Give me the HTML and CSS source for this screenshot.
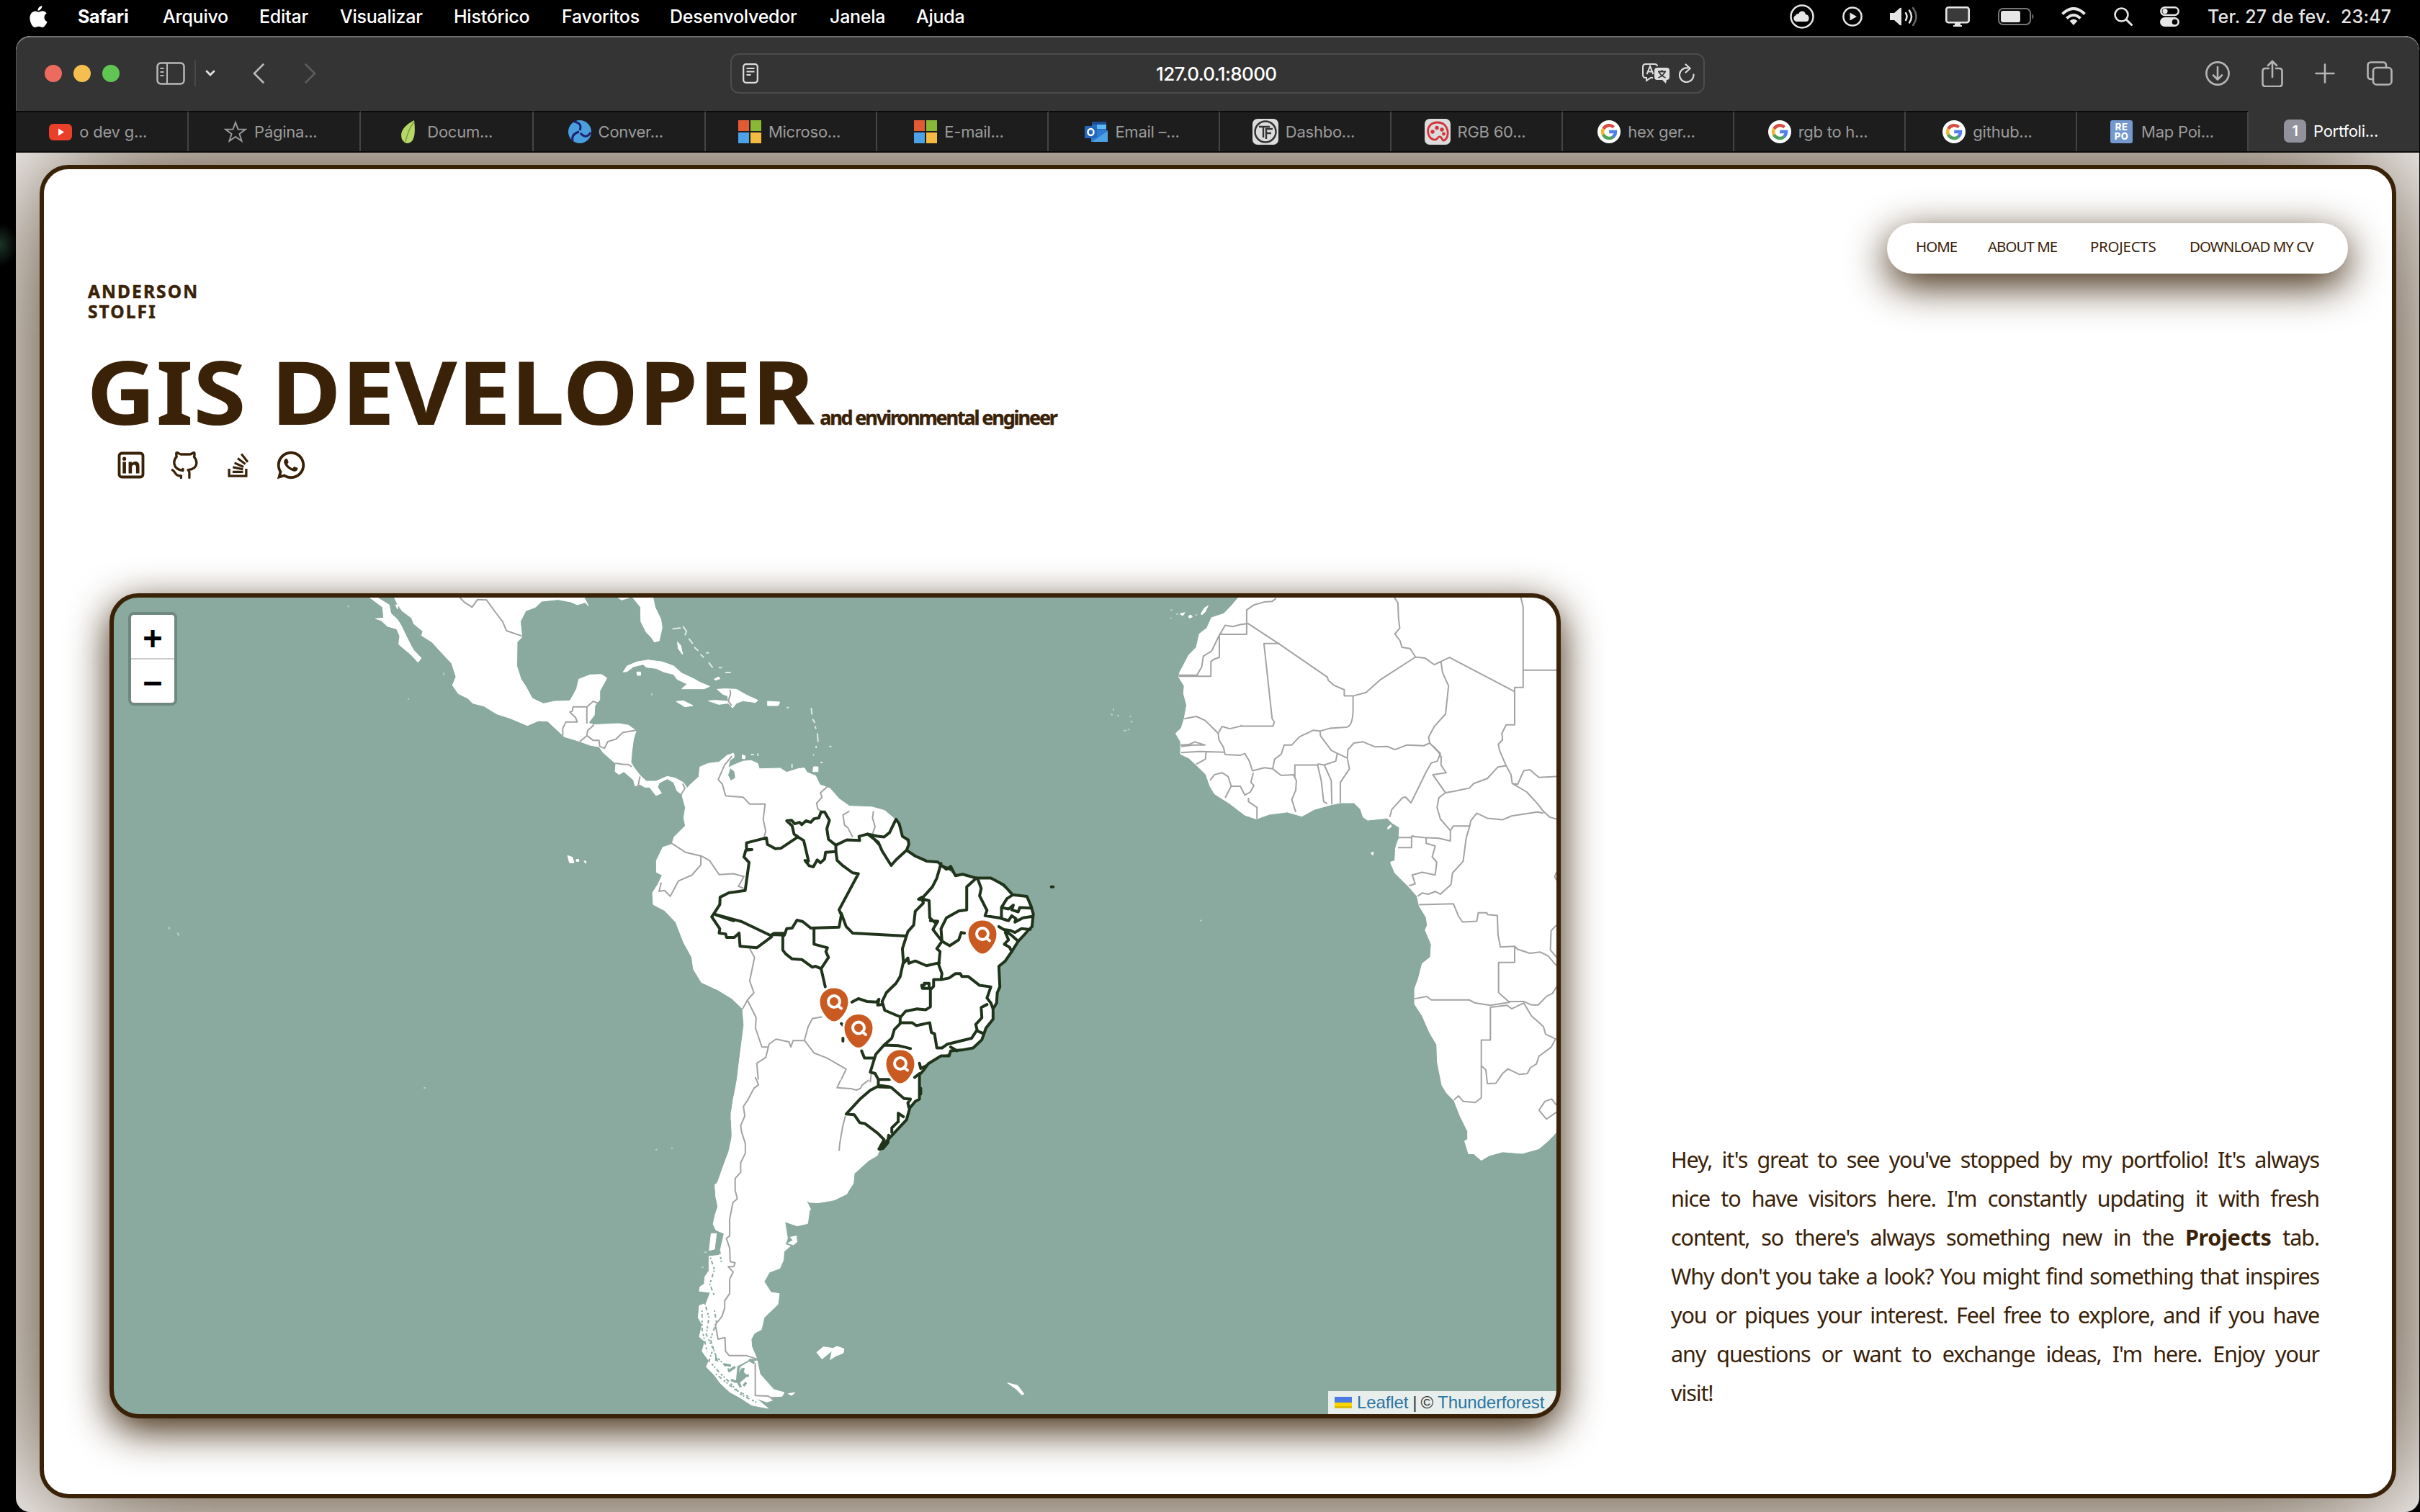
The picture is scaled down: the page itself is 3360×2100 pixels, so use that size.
FILE: index.html
```html
<!DOCTYPE html>
<html lang="pt-BR">
<head>
<meta charset="utf-8">
<title>Portfolio</title>
<link rel="stylesheet" href="styles.css">
</head>
<body>
<svg class="defs" width="0" height="0">
  <symbol id="ms" viewBox="0 0 32 32"><path fill="#e25a33" d="M0 0h15v15H0z"/><path fill="#8ab735" d="M17 0h15v15H17z"/><path fill="#4ca1e8" d="M0 17h15v15H0z"/><path fill="#f5ba41" d="M17 17h15v15H17z"/></symbol>
  <symbol id="google" viewBox="0 0 32 32"><circle cx="16" cy="16" r="16" fill="#fff"/><g fill="none" stroke-width="4.4"><path stroke="#d94b3f" d="M8.2 12A9.2 9.2 0 0 1 22.6 9.6"/><path stroke="#efb734" d="M8.2 20.4A9.2 9.2 0 0 1 8.2 11.6"/><path stroke="#4fa259" d="M22.2 22.8A9.2 9.2 0 0 1 8 20"/><path stroke="#4e80ee" d="M16.2 16H25A9.2 9.2 0 0 1 21.8 23"/></g></symbol>
  <symbol id="pin" viewBox="-3 -3 48 54"><path fill="#c85a22" stroke="#fff" stroke-width="3" d="M0 20C0 8 9-.5 21-.5S42 8 42 20C42 33 30 48.500 21 48.500S0 33 0 20z"/><circle cx="21" cy="19.500" r="8" fill="none" stroke="#fff" stroke-width="4"/><path d="m26 25 5 4" stroke="#fff" stroke-width="4" stroke-linecap="round"/></symbol>
</svg>

<header class="menubar">
  <svg class="apple" viewBox="0 0 26 32"><path fill="#fff" d="M18 0c.3 3.500-2.800 7-6 7C11.600 3.800 14.800.4 18 0zM13 9c1.300 0 3-1.400 5.600-1.400 2.200 0 4.600 1.100 6 3.200-5 3-4.200 10 .9 12-1.200 3.400-4 8.200-7.200 8.200-2 0-2.700-1.200-5-1.200S10 31 8.200 31C4.500 31 .5 24.200.5 17.800.5 11.500 4.500 7.700 8.400 7.700 10.600 7.700 12.200 9 13 9z"/></svg>
  <nav class="menus"><b>Safari</b><span>Arquivo</span><span>Editar</span><span>Visualizar</span><span>Histórico</span><span>Favoritos</span><span>Desenvolvedor</span><span>Janela</span><span>Ajuda</span></nav>
  <div class="status">
    <svg width="34" height="34" viewBox="0 0 34 34"><circle cx="17" cy="17" r="15.500" fill="none" stroke="#e6e6e6" stroke-width="2.500"/><path fill="#e6e6e6" d="M9 24a4.500 4.500 0 0 1-1-8.500c1-2.500 3-2.500 4-2 2-5.500 9-5 10 .5 6 0 6 10 1 10z"/></svg>
    <svg width="28" height="28" viewBox="0 0 28 28"><circle cx="14" cy="14" r="12.600" fill="none" stroke="#e6e6e6" stroke-width="2.500"/><path fill="#e6e6e6" d="M10.500 8.500 20 14l-9.500 5.500z"/></svg>
    <svg width="38" height="28" viewBox="0 0 38 28"><path fill="#e6e6e6" d="M0 9h6l8-7q2-1 2 1v22q0 2-2 1l-8-7H0z"/><g fill="none" stroke="#e6e6e6" stroke-width="2.500" stroke-linecap="round"><path d="M22 9q3 5 0 10"/><path d="M27 5.500q6 8.500 0 17"/><path stroke="#666" d="M32 2q9 12 0 24"/></g></svg>
    <svg width="34" height="28" viewBox="0 0 34 28"><rect x="1.300" y="1.300" width="31.400" height="21" rx="3" fill="#3a3a3a" stroke="#e6e6e6" stroke-width="2.600"/><path fill="#e6e6e6" d="M13 22h8v4h2v2H11v-2h2z"/></svg>
    <svg width="50" height="24" viewBox="0 0 50 24"><rect x="1" y="1" width="44" height="22" rx="6" fill="none" stroke="#777" stroke-width="2"/><rect x="4" y="4" width="27" height="16" rx="3" fill="#e6e6e6"/><path fill="#777" d="M47.500 8q4 4 0 8z"/></svg>
    <svg width="34" height="26" viewBox="0 0 34 26"><g fill="none" stroke="#e6e6e6" stroke-width="4"><path d="M1.500 9.500q15.500-15 31 0"/><path d="M7.500 15.500q9.500-9 19 0"/></g><path fill="#e6e6e6" d="m17 25-5.500-6q5.500-5 11 0z"/></svg>
    <svg width="26" height="26" viewBox="0 0 26 26"><circle cx="10.500" cy="10.500" r="9" fill="none" stroke="#e6e6e6" stroke-width="2.600"/><path d="m17 17 7.500 7.500" stroke="#e6e6e6" stroke-width="3" stroke-linecap="round"/></svg>
    <svg width="27" height="28" viewBox="0 0 27 28"><rect x="1.300" y="1.300" width="24.400" height="10.600" rx="5.300" fill="none" stroke="#e6e6e6" stroke-width="2.500"/><circle cx="7" cy="6.600" r="3.600" fill="#e6e6e6"/><rect y="15" width="27" height="13" rx="6.500" fill="#e6e6e6"/><circle cx="20.500" cy="21.500" r="3.800" fill="#000"/></svg>
    <span class="clock">Ter. 27 de fev.&nbsp; 23:47</span>
  </div>
</header>

<main class="window">
  <div class="toolbar">
    <div class="lights"><i></i><i></i><i></i></div>
    <svg class="side" viewBox="0 0 40 32"><rect x="1.500" y="1.500" width="37" height="29" rx="5" fill="none" stroke="#b8b8b8" stroke-width="2.500"/><path d="M15 2v28M5.500 9h5M5.500 14h5M5.500 19h5" stroke="#b8b8b8" stroke-width="2"/></svg>
    <span class="sep"></span>
    <svg class="chev" viewBox="0 0 14 10"><path d="m2 2 5 5 5-5" fill="none" stroke="#e0e0e0" stroke-width="2.800" stroke-linecap="round"/></svg>
    <svg class="back" viewBox="0 0 16 28"><path d="M14.500 1.500 2 14l12.500 12.500" fill="none" stroke="#b8b8b8" stroke-width="2.600" stroke-linecap="round"/></svg>
    <svg class="fwd" viewBox="0 0 16 28"><path d="M1.500 1.500 14 14 1.500 26.500" fill="none" stroke="#5c5c5c" stroke-width="2.600" stroke-linecap="round"/></svg>
    <div class="url">
      <svg width="22" height="28" viewBox="0 0 22 28"><rect x="1.200" y="1.200" width="19.600" height="25.600" rx="3.500" fill="none" stroke="#ddd" stroke-width="2.200"/><path d="M5.500 7h11M5.500 11.500h11M5.500 16h6" stroke="#ddd" stroke-width="2"/></svg>
      <span class="address">127.0.0.1:8000</span>
      <svg class="translate" width="38" height="28" viewBox="0 0 38 28"><path d="M15 20h-3l-6 4v-4H5q-4 0-4-4V5q0-4 4-4h12q4 0 4 3" fill="none" stroke="#ddd" stroke-width="2"/><path d="m6.500 15 4.500-11 4.500 11M8 11.500h6" fill="none" stroke="#ddd" stroke-width="2"/><path fill="#ddd" d="M21 6h13q4 0 4 4v9q0 4-4 4l-1 5-5-5h-7q-4 0-4-4v-9q0-4 4-4z"/><path d="M22 11.500h11M27.500 9v3M31.500 12q-2 5-9 8M23.500 12q2 5 9 8" fill="none" stroke="#343434" stroke-width="1.800"/></svg>
      <svg width="22" height="28" viewBox="0 0 22 28"><path d="M12 6.500a9.800 9.800 0 1 0 8.500 9M9.500 1.500l6 5.500-6 5.500" fill="none" stroke="#ddd" stroke-width="2.200" stroke-linecap="round"/></svg>
    </div>
    <div class="tools">
      <svg width="34" height="34" viewBox="0 0 34 34"><circle cx="17" cy="17" r="15.600" class="ln"/><path class="ln" d="M17 8v17M11 19.500l6 6 6-6"/></svg>
      <svg width="30" height="38" viewBox="0 0 30 38"><path class="ln" d="M10 12H5.500q-4 0-4 4v17q0 4 4 4h19q4 0 4-4V16q0-4-4-4H20M15 24V2M9 8l6-6 6 6"/></svg>
      <svg width="28" height="28" viewBox="0 0 28 28"><path class="ln" d="M14 1.500v25M1.500 14h25"/></svg>
      <svg width="36" height="34" viewBox="0 0 36 34"><rect class="ln" x="9" y="9" width="25.500" height="23.500" rx="4.500"/><path class="ln" d="M9 25H6q-4.500 0-4.500-4.500V6Q1.500 1.500 6 1.500h16.500Q27 1.500 27 6v3"/></svg>
    </div>
  </div>

  <div class="tabs">
    <div class="tab"><svg viewBox="0 0 32 32"><rect y="5" width="32" height="23" rx="6" fill="#ea3f28"/><path fill="#fff" d="m13 11.500 8 5-8 5z"/></svg>o dev g...</div>
    <div class="tab"><svg viewBox="0 0 32 32"><path d="m16 3 3.500 9.500 10 .3-8 6.200 3 9.800-8.500-5.800-8.500 5.800 3-9.800-8-6.200 10-.3z" fill="none" stroke="#999" stroke-width="2"/></svg>Página...</div>
    <div class="tab"><svg viewBox="0 0 32 32"><path fill="#b7d869" d="M24 0q4 32-10 32-8-2-8-12Q7 9 24 0z"/><path d="M24 2Q16 12 12 30" fill="none" stroke="#7d9d3c" stroke-width="1.500"/></svg>Docum...</div>
    <div class="tab"><svg viewBox="0 0 32 32"><circle cx="16" cy="16" r="16" fill="#4a9fdf"/><g fill="none" stroke="#20206e" stroke-width="3"><path d="M8 2q12 2 8 12"/><path d="M31 17q-6 10-14 1"/><path d="M6 29q-2-10 9-13"/></g></svg>Conver...</div>
    <div class="tab"><svg><use href="#ms"/></svg>Microso...</div>
    <div class="tab"><svg><use href="#ms"/></svg>E-mail...</div>
    <div class="tab"><svg viewBox="0 0 32 32"><path fill="#2b6fc9" d="M10 2h20v20H10z"/><path fill="#1d4d97" d="M10 2h20v4H10z"/><path fill="#5db9f0" d="M17 6h13v6H17z"/><path fill="#2f7bd2" d="M9 14h23v16H9z"/><path fill="#4ea2e4" d="m32 15-22 15h22z"/><rect y="8" width="17" height="17" rx="1.500" fill="#2567bd"/><ellipse cx="8.500" cy="16.500" rx="4" ry="4.500" fill="none" stroke="#fff" stroke-width="2.500"/></svg>Email –...</div>
    <div class="tab"><svg class="big" viewBox="0 0 36 36"><rect width="36" height="36" rx="7" fill="#dcdcdc"/><circle cx="18" cy="18" r="14.500" fill="none" stroke="#333" stroke-width="2.500"/><path d="M9 11h15M15 11v15M28 14h-9v14M19 20h7" fill="none" stroke="#333" stroke-width="2.400"/></svg>Dashbo...</div>
    <div class="tab"><svg class="big" viewBox="0 0 36 36"><rect width="36" height="36" rx="7" fill="#dcdcdc"/><path d="M18 5c17 0 17 22 9 25-4 1-2-6-7-5-3 1-2 5-7 4C2 27 0 5 18 5z" fill="none" stroke="#d2343a" stroke-width="2.800"/><g fill="#d2343a"><circle cx="11" cy="18" r="2.700"/><circle cx="17" cy="12.500" r="2.700"/><circle cx="24" cy="15" r="2.700"/><circle cx="26.500" cy="21" r="2.400"/></g></svg>RGB 60...</div>
    <div class="tab"><svg><use href="#google"/></svg>hex ger...</div>
    <div class="tab"><svg><use href="#google"/></svg>rgb to h...</div>
    <div class="tab"><svg><use href="#google"/></svg>github...</div>
    <div class="tab"><span class="fav repo">RE<br>PO</span>Map Poi...</div>
    <div class="tab on"><span class="fav one">1</span>Portfoli...</div>
  </div>

  <section class="page">
    <article class="card">
      <nav class="pill"><a>HOME</a><a>ABOUT ME</a><a class="wide">PROJECTS</a><a>DOWNLOAD MY CV</a></nav>
      <p class="name"><span>ANDERSON</span><span>STOLFI</span></p>
      <h1><span class="gis">GIS DEVELOPER</span><small>and environmental engineer</small></h1>
      <div class="social">
        <svg viewBox="0 0 24 24"><rect x="3.400" y="3.400" width="17.200" height="17.200" rx="1.800" fill="none" stroke="#3a2208" stroke-width="2"/><path d="M5.900 9.600h2.400V18H5.900zM10.200 9.600h2.300v1c1.700-1.900 5.500-1.600 5.500 2V18h-2.400v-4.500c0-2.500-3-2.300-3 0V18h-2.400z"/><circle cx="7.100" cy="7.400" r="1.350"/></svg>
        <svg viewBox="0 0 24 24"><path class="cat" d="M10.900 14.800V16C2.500 14.500 4.300 8 6.400 5.900 6 4.500 6 3 6.500 3c1.200 0 2 1.300 3.200 1.200h5.900C17 4.300 18 3 19 3c.4 0 .5 1.500 0 2.900 2 2.300 4 8.600-4.300 9.600q.9.8.9 2v3.600M3.300 15.600c2.300.7 1.700 4.600 6.300 4.100v1.500"/></svg>
        <svg viewBox="0 0 24 24"><path d="M5.800 14.600v5.300h12.400v-5.300" fill="none" stroke="#3a2208" stroke-width="1.700"/><path d="M8.300 16.900h7.600M8.500 13.500l7.400 1.500M9.700 10.400l6.500 2.900M12 7l5.500 4.200M14.700 3.900l4.600 5.900" stroke="#3a2208" stroke-width="1.600"/></svg>
        <svg viewBox="0 0 24 24"><path d="m7.254 18.494.724.423A7.953 7.953 0 0 0 12.001 20a8 8 0 1 0-8-8c0 1.436.377 2.813 1.084 4.024l.422.724-.653 2.401 2.400-.655zM2.005 22l1.352-4.968A9.954 9.954 0 0 1 2.001 12c0-5.523 4.477-10 10-10s10 4.477 10 10-4.477 10-10 10a9.954 9.954 0 0 1-5.030-1.355L2.004 22zM8.392 7.308c.134-.01.269-.01.403-.004.054.004.108.01.162.016.159.018.334.115.393.249.298.676.588 1.357.868 2.040.062.152.025.347-.093.537a4.380 4.380 0 0 1-.263.372c-.113.145-.356.411-.356.411s-.099.118-.061.265c.256.500.700 1.160 1.181 1.568.12.116.237.235.363.346.468.413.998.75 1.570 1 .085.037.133.059.257.112.062.026.126.049.191.066a.35.35 0 0 0 .367-.13c.724-.877.79-.934.796-.934a.482.482 0 0 1 .378-.127c.06.004.121.015.177.04.531.243 1.400.622 1.400.622l.582.261c.098.047.187.158.19.265.004.067.01.175-.013.373-.032.259-.11.57-.188.733a2.378 2.378 0 0 1-.54.590 5.024 5.024 0 0 1-.508.310 1.990 1.990 0 0 1-.833.23c-.185.01-.37.024-.556.014-.008 0-.568-.087-.568-.087a9.448 9.448 0 0 1-3.840-2.046c-.226-.199-.435-.413-.649-.626-.89-.885-1.562-1.840-1.970-2.742A3.470 3.470 0 0 1 6.900 9.620a2.729 2.729 0 0 1 .564-1.680c.073-.094.142-.192.261-.305.127-.12.207-.184.294-.228a.961.961 0 0 1 .371-.1z"/></svg>
      </div>

      <div class="row">
        <div class="map">
          <svg class="world" viewBox="158 830 2003 1134">
            <path class="isles faint" d="M235 1288v2M247 1296l1 3M589 1511h1M1543 992l1 1M1552 994h1M1546 985v1"/>
            <!-- North and Central America, Caribbean -->
            <g transform="translate(480 810) scale(.44643 .33333)">
              <g class="land">
                <path d="M150 55 160 85 175 115 205 145 212 170 240 200 236 218 268 245 300 292 330 335 343 390 332 425 350 460 380 480 395 500 430 512 470 545 510 562 565 593 600 573 628 575 660 615 680 640 725 658 760 675 788 682 800 705 840 752 838 785 850 797 865 785 895 820 900 845 915 838 930 850 945 850 965 885 982 875 970 850 975 832 1000 815 1020 830 1030 865 1045 880 1075 880 1060 850 1050 830 1025 812 1000 805 965 825 935 825 915 800 895 765 887 745 890 700 895 650 903 615 880 592 850 585 800 588 772 590 755 582 773 550 775 510 790 485 790 450 800 425 812 395 795 380 760 382 725 400 718 440 708 465 697 490 650 492 615 502 580 480 560 430 545 400 532 345 533 245 548 225 543 160 560 115 590 100 610 75 660 68 700 78 720 90 745 80 755 95 740 55z"/>
                <path d="M70 55 98 60 135 90 140 125 160 150 172 175 188 220 205 265 212 280 235 312 225 330 205 300 165 255 168 220 158 190 130 180 110 155 93 148 118 145 115 100 90 75z"/>
                <path d="M155 90h8l-2 18zM890 55 955 55 962 100 980 150 984 185 975 240 960 245 950 225 935 205 918 160 917 100zM845 58 858 70 882 60z"/>
                <path d="M863 370 875 345 905 328 940 320 985 328 1020 345 1045 375 1085 400 1100 412 1132 430 1115 440 1045 440 1062 420 1030 400 1020 380 990 370 965 355 935 350 925 338 895 348 875 368z"/>
                <path d="M905 370h12v14h-10zM1028 493 1050 490 1080 510 1055 515zM1155 442 1180 440 1215 442 1245 465 1282 488 1275 497 1235 490 1215 500 1203 520 1190 500 1160 505 1128 490 1150 488 1190 492 1188 470 1172 462zM1312 492 1350 495 1345 510 1312 510zM1032 245 1042 260 1048 297 1034 272z"/>
                <path d="M1455 765h14v20h-16zM1233 715l10 5-2 12-8-2zM1146 400l14-10 4 8-14 6zM690 1135 705 1142 710 1165 696 1165zM717 1151h8v8h-8zM741 1158h6v10z"/>
              </g>
              <path class="isles" d="M1018 190 1040 187M1050 182 1060 200 1056 215M1068 232 1078 250M1085 268 1095 280M1105 298 1112 308M1122 290h6M1130 332 1140 350M1162 352h6M1182 372h14M1373 518h3M1448 522 1450 545M1453 568 1458 580M1460 598 1462 605M1467 628 1469 658M1463 680v5M1506 680h3M1478 747h4M1262 714h6M1282 712v6M1388 755v12"/>
              <path class="isles faint" d="M305 375v5M195 482v2M8 95v3M952 460v5M1455 713v5"/>
              <path class="border" d="M355 60 370 80 393 100 410 68 438 70 465 120 488 160 500 198 548 220M675 635V605L685 578H720L715 560 697 537 705 533 707 515H750V585M750 515 770 492 785 500M772 590 752 615 750 635 728 660M750 635 770 655 788 655 790 680 805 688 815 660 840 650 862 622 903 613M838 750 865 755 878 755 890 765M915 805 908 855M1048 835 1055 855 1042 882M1195 445 1197 460 1190 490 1200 510"/>
            </g>
            <!-- South America, northern part -->
            <g transform="translate(840 1040) scale(.44643 .40816)">
              <path class="land" d="M240 160 262 125 292 95 295 62 320 50 355 45 380 22 400 15 402 28 388 40 383 65 400 55 430 42 455 40 475 50 480 68 545 66 565 80 600 68 620 65 628 80 655 92 668 122 700 135 728 170 760 195 830 198 870 210 902 240 915 255 925 300 945 325 938 345 980 375 1040 385 1085 430 1115 428 1155 442 1200 440 1265 495 1312 502 1332 560 1322 620 1285 655 1262 690 1225 740 1228 810 1215 860 1207 920 1180 955 1172 990 1145 1018 1085 1025 1050 1045 1005 1075 990 1095 978 1120 980 1190 950 1215 935 1265 885 1318 855 1365 835 1390 815 1400 775 1445 772 1480 750 1515 700 1538 660 1545 625 1535 640 1568 352 1568 342 1490 352 1470 368 1420 385 1370 395 1320 392 1240 400 1190 410 1130 418 1060 425 1000 432 940 428 885 395 850 350 820 300 795 275 750 270 710 245 660 220 590 185 550 150 530 148 490 165 460 178 430 160 420 160 380 180 335 208 325 215 300 250 262 245 235 250 200z"/>
              <path class="sea" d="M390 66 402 78 405 98 392 108 383 90z"/>
              <path class="border" d="M395 25 372 55 352 105 365 120 375 160 430 165 450 188 498 188 492 240 500 280 495 300M692 128 670 150 675 165 658 185 662 205 675 215M760 212 740 225 745 260 755 268 770 300M835 212 832 235 840 265 832 290M205 320 250 352 300 365 325 380 355 428 400 425 432 435 415 468 432 475M298 365V395L270 430 228 450 203 502 185 482 168 485 175 455M450 680 465 710 450 790 463 830 443 855 428 885M443 855 470 915 468 950 488 1015 508 1015 500 1050 472 1070 478 1140M508 1015 510 1005 532 988 572 997 578 1015 585 993 620 992 650 1035 690 1052 750 1090 732 1132M825 1135 828 1105M620 992 632 945 645 918 675 912"/>
            </g>
            <!-- Southern cone -->
            <g transform="translate(860 1500) scale(.38265 .33333)">
              <g class="land">
                <path d="M430 0 413 80 405 160 410 210 405 280 390 340 370 390 358 430 347 435 350 490 358 525 348 560 340 600 350 625 380 640 370 690 360 740 365 790 350 840 335 880 330 920 345 960 330 1020 335 1100 360 1170 385 1210 430 1190 480 1160 498 1160 480 1110 478 1080 490 1055 515 1040 525 990 575 935 580 890 550 885 525 840 545 800 582 785 595 750 597 715 620 692 602 685 610 660 600 590 645 608 683 598 690 540 675 500 690 510 720 511 780 500 825 475 850 420 850 392 905 335 935 315 945 290 900 0z"/>
                <path d="M333 640 352 640 345 705 326 710zM620 655 642 650 644 675 632 687 612 680 630 668zM440 1195 470 1175 500 1170 510 1225 560 1290 598 1302 590 1318 540 1320 555 1335 535 1342 455 1310 430 1270 465 1235zM612 1307 637 1303 625 1314z"/>
                <path d="M325 735 365 730 365 900 345 1170 440 1200 420 1260 480 1300 500 1330 540 1368 480 1355 440 1325 400 1300 365 1262 345 1230 315 1195 325 1170 300 1130 310 1090 290 1070 300 1020 286 990 290 940 315 930 330 885 290 880 292 862 308 850 310 820 325 795z"/>
                <path d="M716 1135 740 1112 775 1118 790 1110 815 1120 812 1138 785 1150 765 1165 772 1128 735 1162zM1408 1262 1445 1273 1468 1308 1460 1312 1440 1288z"/>
              </g>
              <path class="fjord" d="M330 740 345 790 328 850 345 900M310 930 325 990 315 1060 340 1120 325 1170 360 1215 400 1260 440 1310 500 1345M345 960 352 1010 330 1080 350 1150 400 1210M300 960 300 1040 318 1130M370 640 362 700 370 760M350 1225 420 1290 470 1320"/>
              <path class="strait" d="M380 1185 405 1190M395 1215 420 1195M432 1195 428 1250 440 1280M450 1200 445 1230 470 1232M470 1165 490 1180M405 1250 425 1258M460 1260 450 1275"/>
              <path class="border" d="M493 -12 505 20 488 35 465 85 450 110 455 150 440 190 443 215 457 265V305L440 345V385L420 410V460L428 495 412 510 400 580V650L388 660 400 700 402 757 420 762 415 778 395 778 413 800 400 830V890L382 920V950L372 985 348 1020 358 1080 383 1073 385 1130 398 1148 460 1148 498 1162M493 1180V1315L540 1317 560 1332M820 150 810 195 800 262 797 295M905 0 880 22 875 35 860 42 840 36 790 32 803 0"/>
              <path class="isles faint" d="M190 285h2M133 290h2M310 718h5M300 780h3"/>
            </g>
            <!-- Africa -->
            <g transform="translate(1560 800) scale(.42092 .53571)">
              <path class="land" d="M385 50 355 78 330 98 290 108 275 135 250 150 240 185 215 205 185 250 182 262 200 285 198 305 208 335 200 370 190 395 172 408 188 430 188 462 215 472 240 490 272 515 285 545 300 565 350 590 400 620 438 630 480 618 540 612 588 623 630 605 685 593 715 588 760 588 782 605 790 625 805 633 870 628 885 640 910 652 908 680 897 705 895 738 880 742 895 770 940 805 968 830 975 855 998 885 1002 905 995 918 1015 955 1012 988 985 1005 972 1045 960 1070 960 1110 985 1140 1010 1185 1033 1215 1035 1260 1050 1320 1065 1340 1090 1360 1110 1400 1135 1440 1135 1460 1125 1465 1138 1498 1155 1498 1180 1515 1205 1503 1250 1493 1315 1497 1370 1485 1400 1465 1428 1442 1440 1430 1440 50z"/>
              <path class="land" d="M186 98 202 95 195 103zM214 104l8-3 5 5-10 3zM255 98l12-15 12-6-10 16-10 8zM871 652l10-7 3 4-12 8zM816 718l8-2-2 8z"/>
              <path class="isles faint" d="M156 88h3M155 109h2M175 99h3M238 101h3M22 364h2M25 378h3M2 401h6M16 398h2M254 893h2"/>
              <path class="border" d="M503 58 490 66 465 67 430 75 406 88V151H316V211L300 215 288 222V260H182M182 257 242 257 258 235 263 208 290 195 315 155 335 128 360 131 385 126 410 123 515 177 672 262 675 270 693 283 728 295V311H757L800 302 845 270 963 210M515 175H463L490 370 497 378 493 389H388L350 396 325 390 312 408M388 386v4M893 55 905 70 907 110 911 135 895 150 912 168 918 185 945 188 963 210 995 213 1025 230 1075 211 1288 299M1310 55 1318 80V289H1290V386H1262L1248 408 1250 425 1236 436 1240 452 1262 492 1278 515 1282 538 1330 560 1365 590 1385 610 1405 625 1428 630M1318 244H1430M1047 222 1052 250 1072 285 1062 358 1025 390 1006 418 1010 433 1040 458 1048 470 1047 490 1064 510 1020 515 1062 562 1040 575 1034 600 1045 630 1078 660V687L1040 680 990 678 950 675V704H905M905 678H950M757 311V350Q755 390 735 392L680 395 648 402 625 400 580 417 555 438 530 438 520 462 498 475 492 500 465 497 425 505 415 480 400 460 385 465 335 463 330 445 315 425 312 408 270 375 240 364 200 370M648 402 650 415 672 438 685 452 705 460 738 472 740 450 760 433 790 430 830 443 870 442 895 450 935 438 990 440 1010 433M188 438 215 437 235 430 268 438 230 438 190 442M190 458 250 455 335 457M240 488 270 475 272 457M285 530 300 515 325 510 345 520 355 545 335 575M355 545 385 545 400 568 418 560 430 543 420 535 428 510M412 575 412 585 440 600V630M492 500 520 517 560 515 570 530 568 555 555 580 568 612M565 525V490H640L652 530 660 585 672 590M640 487 662 490 685 530 687 592M662 490 700 480 705 460M738 472 745 500 715 535V588M878 625 885 605 920 575 930 573 948 588 975 545 1000 505 1015 485 1035 480 1045 460 1020 440M1062 562 1090 558 1140 550 1155 538 1200 525 1235 495 1262 492M1282 538 1300 540 1320 505 1340 502 1370 522 1428 520M1078 660 1088 648H1142L1145 635 1165 615 1200 628 1250 632 1280 622 1365 612 1385 615M1142 648 1130 680 1120 740 1085 770 1080 800 1045 825 1028 818 1005 825 985 822 970 830M998 678V693L1028 700 1018 728 1033 742 1028 775 985 768 952 775 962 798 942 803M975 852 1088 850 1105 882 1118 897 1165 895 1170 873 1198 873 1200 878 1233 880 1235 930 1243 962 1290 960 1300 968 1340 978 1375 975 1400 985 1428 1010M1290 960V1002H1237V1080L1270 1103 1320 1103 1345 1112 1368 1112 1395 1090 1415 1082 1428 1065M960 1096 1000 1090 1015 1099H1140L1160 1107 1210 1113 1275 1105M1210 1118 1265 1113 1280 1122 1320 1107 1345 1140 1385 1168 1392 1188 1425 1200 1410 1222 1370 1245 1362 1265 1342 1275 1332 1290 1305 1292 1268 1278 1250 1290 1228 1315 1200 1316 1195 1280 1180 1270M1210 1118V1203H1180V1353L1160 1365 1120 1362 1105 1348 1090 1358M1370 1385 1390 1362 1412 1356 1428 1372M1370 1385 1395 1408 1428 1390M1428 905 1410 920 1408 970 1428 988M1428 768 1422 780 1428 788M950 675 958 674"/>
            </g>
            <!-- Brazilian states -->
            <g class="states" transform="translate(840 1040) scale(.44643 .40816)">
              <path d="M600 300 548 338 530 340 505 325 502 303 440 320V340L457 343 438 345 432 368 448 387 436 482 385 490 358 505 357 530 338 562 332 572 357 612 355 627 375 630 378 642 402 642 417 627 420 672 472 677 518 640M338 562 425 588 515 635 525 628 560 628 565 612 582 610 597 583 615 588 640 610 728 607 735 565 728 548 788 425 770 422 740 398 722 380 718 350M345 565 400 585M520 632 558 634"/>
              <path d="M600 300 588 290 582 262 565 245 580 243 590 255 605 250 612 258 625 245 640 250 650 238 665 235 672 215 683 215 698 243 690 272 695 308 718 328V350L686 352 683 375 670 388 660 378 648 402 635 398 622 380 633 382 618 312z"/>
              <path d="M718 328 752 310 792 312 790 298 817 290 850 318 862 348 890 397 905 378 938 345 945 325 943 310 925 298 915 255 905 240 885 285 868 300 845 297 817 290M835 305 852 325"/>
              <path d="M938 345 965 365 980 372 1000 382 1035 385 1048 398 1062 410 1075 400 1090 432 1112 427 1155 440 1200 440 1240 463 1268 497 1312 502 1325 535 1332 562 1328 605 1285 655 1265 690 1245 722 1225 740 1228 810 1220 830 1218 865 1207 885V920L1185 950 1172 990 1145 1018 1110 1025 1075 1028 1070 1045 1045 1045 1005 1072 990 1095 978 1110V1192L965 1200 948 1222 938 1262 880 1330 855 1362M1075 1015 1095 1028M982 1155V1175"/>
              <path d="M1045 390 1032 440 1018 470 985 510 990 525 965 553 960 600 942 622 925 680 928 725 918 775 905 798 875 830 862 860M735 560 750 605 770 627 935 637M1050 400 1075 410M985 505 975 512 995 515"/>
              <path d="M985 510 1008 517 1010 575 1030 595 1020 615 1048 655M1155 440 1125 470V548L1100 552 1062 575 1045 612 1048 655 1072 670 1100 650 1108 625 1118 627M1012 585 1035 587 1025 605M1160 445 1170 475 1165 500 1188 550 1182 568 1225 575"/>
              <path d="M1268 497 1250 510 1233 540V575M1233 540 1255 545 1270 532 1265 548 1285 555 1290 540 1325 542M1225 575 1255 585 1265 568 1278 578 1275 590 1300 575 1330 570M1225 605 1240 615 1260 618 1275 625 1295 612 1322 615M1245 620 1265 635 1285 655M1245 625 1255 650 1242 665 1258 675 1265 690"/>
              <path d="M1048 655 1032 680 1042 690 1038 735 1048 765 1045 785 1022 785V808L1012 820V878L998 888 970 885 935 893 920 912M1048 785 1070 780 1090 765 1105 765 1110 775 1130 775 1165 805 1200 810 1188 848 1200 865 1207 885M930 728 942 712 945 730 965 722 1000 738 1040 728M985 805H993V798H1008V815H987z"/>
              <path d="M862 860 870 890 918 912V932M768 862 788 850 815 860 845 862 852 852 848 872 862 870M1188 870 1170 880 1172 915 1153 938 1158 960 1175 968M1155 960 1140 985 1065 1005 1048 1018 1032 1018 1025 970 1015 965 1010 932 968 942 955 932 918 932"/>
              <path d="M918 935 900 955 892 985 868 1008 912 1010 950 1020M868 1008 842 1040 825 1100 840 1105 850 1125 885 1125M850 1125V1145L885 1150M735 935 740 940M740 985V995M798 1028 807 1052 838 1052M978 1070 982 1088 1000 1078M978 1105 963 1118"/>
              <path d="M850 1150 890 1152 930 1190 950 1192 942 1205 945 1220M850 1148 825 1162 795 1190 750 1243 775 1245 792 1272 808 1275 848 1308 868 1330 852 1362 865 1360 880 1340 882 1315M912 1270V1240L928 1252M912 1268 892 1290V1305M672 748 685 810"/>
              <path d="M560 628 553 640V685L562 698 582 715 612 717 645 743 655 740 672 748 695 710 687 690 692 677 650 665V610"/>
              <path d="M1388 470h6"/>
            </g>
            <use href="#pin" x="1134" y="1368.500" width="48" height="54"/>
            <use href="#pin" x="1168" y="1405" width="48" height="54"/>
            <use href="#pin" x="1226" y="1454.500" width="48" height="54"/>
            <use href="#pin" x="1340" y="1274.500" width="48" height="54"/>
          </svg>
          <div class="zoom"><span>+</span><span>−</span></div>
          <div class="credit"><svg width="24" height="16" viewBox="0 0 24 16"><path fill="#4c7be1" d="M0 0h24v8H0z"/><path fill="#ffd500" d="M0 8h24v5H0z"/><path fill="#e0bc00" d="M0 13h24v3H0z"/></svg><a>Leaflet</a><span>|</span><span>©</span><a>Thunderforest</a></div>
        </div>
        <p class="intro">
          <span>Hey, it's great to see you've stopped by my portfolio! It's always</span>
          <span>nice to have visitors here. I'm constantly updating it with fresh</span>
          <span>content, so there's always something new in the <b>Projects</b> tab.</span>
          <span>Why don't you take a look? You might find something that inspires</span>
          <span>you or piques your interest. Feel free to explore, and if you have</span>
          <span>any questions or want to exchange ideas, I'm here. Enjoy your</span>
          <span>visit!</span>
        </p>
      </div>
    </article>
  </section>
</main>
</body>
</html>
```
FILE: styles.css
```css
* { box-sizing: border-box; }
html, body { margin: 0; height: 100%; overflow: hidden; }
body {
  width: 3360px; height: 2100px;
  display: flex; flex-direction: column;
  background: radial-gradient(ellipse 24px 30px at 0 340px, #1d3328, transparent), #000;
  font-family: Inter, "Liberation Sans", sans-serif;
}
.defs { position: absolute; }
svg { display: block; flex: none; }

/* menu bar */
.menubar { height: 50px; flex: none; display: flex; align-items: center; padding: 0 39px 4px 40px; color: #fff; font-size: 25px; }
.apple { width: 27px; height: 31px; }
.menus { margin-left: 41px; display: grid; grid-template-columns: 118px 134px 112px 158px 150px 150px 222px 120px 80px; white-space: nowrap; letter-spacing: -.25px; font-weight: 500; }
.menus b { font-weight: 700; }
.status { margin-left: auto; display: flex; align-items: center; gap: 38.6px; color: #e6e6e6; }
.clock { width: 256px; white-space: nowrap; letter-spacing: .2px; font-weight: 500; }

/* browser window */
.window { margin-left: 22px; width: 3337px; flex: 1; display: flex; flex-direction: column; border-radius: 20px; overflow: hidden; background: #fff; }
.toolbar { height: 104px; flex: none; background: #343434; border-top: 2px solid #6d6d6d; border-left: 1px solid #5a5a5a; border-radius: 20px 20px 0 0; display: flex; align-items: center; padding: 0 37px 2px 39px; }
.lights { display: flex; gap: 16px; }
.lights i { width: 24px; height: 24px; border-radius: 50%; background: #ed6a5e; }
.lights i:nth-child(2) { background: #f5bf4f; }
.lights i:nth-child(3) { background: #61c554; }
.side { width: 40px; height: 32px; margin-left: 51px; }
.sep { width: 2px; height: 36px; background: #484848; margin-left: 13px; }
.chev { width: 14px; height: 10px; margin-left: 13px; }
.back { width: 16px; height: 28px; margin-left: 52px; }
.fwd { width: 16px; height: 28px; margin-left: 56px; }
.url { margin-left: 575px; width: 1353px; height: 56px; border: 2px solid #4c4c4c; border-radius: 12px; display: flex; align-items: center; padding: 0 12px 0 15px; color: #fff; font-size: 26px; font-weight: 500; }
.address { margin-left: 552px; letter-spacing: -.6px; flex: 1; }
.translate { margin-right: 13px; }
.tools { margin-left: auto; display: flex; align-items: center; gap: 44px; }
.ln { fill: none; stroke: #b5b5b5; stroke-width: 2.6; stroke-linecap: round; stroke-linejoin: round; }

.tabs { height: 58px; flex: none; display: grid; grid-template-columns: repeat(4, 239.5px) repeat(9, 238px) 1fr; background: #1d1d1d; border-bottom: 2px solid #0a0a0a; }
.tab { display: flex; align-items: center; justify-content: center; gap: 10px; color: #9b9b9b; font-size: 22px; letter-spacing: -.25px; border-right: 2px solid #444; border-top: 2px solid #0a0a0a; white-space: nowrap; padding-right: 4px; }
.tab:nth-child(-n+2) { padding-right: 9px; }
.tab:nth-child(4), .tab:nth-child(6), .tab:nth-child(12) { padding-right: 9px; }
.tab:nth-child(13) { padding-right: 0; gap: 12px; }
.tab svg { width: 32px; height: 32px; }
.tab svg.big { width: 36px; height: 36px; }
.tab.on { background: #343434; color: #fff; border: 0; padding-right: 8px; }
.fav { display: grid; place-content: center; width: 31px; height: 32px; border-radius: 5px; color: #fff; text-align: center; }
.repo { background: #7599cf; font-size: 13px; line-height: 13.5px; font-weight: 800; letter-spacing: .5px; border-radius: 3px; }
.one { background: #92929d; font-size: 20px; border-radius: 7px; font-weight: 600; }

/* page */
.page { flex: 1; display: flex; padding: 17px 32px 19px 33px; min-height: 0; color: #3a2208; font-family: "Noto Sans", sans-serif; overflow: hidden; }
.card { flex: 1; display: flex; flex-direction: column; background: #fff; border: 6px solid #3a2208; border-radius: 40px; box-shadow: 0 0 200px #3a2208; }
.pill { align-self: flex-end; margin: 75px 61px 0 0; width: 640px; height: 70px; border-radius: 35px; background: #fff; box-shadow: 0 16px 56px #3a2208; display: grid; grid-template-columns: 100px 142px 138px 1fr; padding: 0 0 0 40px; line-height: 65px; font-size: 20.5px; letter-spacing: -1px; white-space: nowrap; }
.pill .wide { letter-spacing: -.3px; }
.name { margin: 11px 0 0 61px; font-weight: 700; font-size: 24.5px; line-height: 28px; letter-spacing: 2.1px; -webkit-text-stroke: .5px #3a2208; }
.name span { display: block; }
h1 { margin: 26px 0 0 59px; height: 140px; line-height: 140px; display: flex; align-items: baseline; gap: 88px; white-space: nowrap; }
.gis { font-size: 122.5px; transform: scaleX(1.087); transform-origin: 0 0; }
h1 small { font-size: 27px; letter-spacing: -2.15px; -webkit-text-stroke: .4px #3a2208; }
.social { margin: 10px 0 0 98px; display: flex; gap: 28px; }
.social svg { width: 46px; height: 46px; fill: #3a2208; }
.social .cat { fill: none; stroke: #3a2208; stroke-width: 1.75; stroke-linecap: round; stroke-linejoin: round; }
.row { margin: 155px 0 0 91px; display: flex; align-items: flex-end; }
.map { position: relative; width: 2015px; height: 1146px; border: 6px solid #3a2208; border-radius: 40px; background: #8aaa9f; overflow: hidden; box-shadow: 0 16px 56px #3a2208; }
.world { width: 2003px; height: 1134px; }
.world path { vector-effect: non-scaling-stroke; }
.land { fill: #fff; stroke: #fff; stroke-width: 1; stroke-linejoin: round; }
.sea { fill: #8aaa9f; }
.border { fill: none; stroke: #a3a3a3; stroke-width: 2; stroke-linejoin: round; }
.isles { fill: none; stroke: #dfe9e5; stroke-width: 2; stroke-linecap: round; }
.isles.faint { stroke: #bccfc8; }
.fjord { fill: none; stroke: #8aaa9f; stroke-width: 2; stroke-dasharray: 2 3 5 4 3 2; }
.strait { fill: none; stroke: #8aaa9f; stroke-width: 3.5; }
.states { fill: none; stroke: #20341b; stroke-width: 4; stroke-linejoin: round; stroke-linecap: round; }
.zoom { position: absolute; left: 20px; top: 20px; width: 68px; height: 130px; border: 4px solid #6f8880; border-radius: 8px; background: #fff; overflow: hidden; }
.zoom span { display: block; height: 60px; text-align: center; color: #000; font: 700 44px/64px "DejaVu Sans Mono", monospace; }
.zoom span:first-child { height: 62px; border-bottom: 2px solid #ccc; }
.credit { position: absolute; right: 0; bottom: 0; height: 32px; width: 317px; padding: 0 9px; display: flex; align-items: center; gap: 7px; background: rgba(255,255,255,.8); font: 24px/32px "Liberation Sans", sans-serif; color: #333; white-space: nowrap; letter-spacing: -.1px; }
.credit a { color: #2b76a3; }
.credit span { margin: 0 -1px; }
.intro { margin: 0 0 9px 153px; width: 900px; font-size: 30.5px; line-height: 54px; letter-spacing: -1.1px; }
.intro b { letter-spacing: -.4px; }
.intro span { display: block; text-align-last: justify; white-space: nowrap; }
.intro span:last-child { text-align-last: left; }
```
